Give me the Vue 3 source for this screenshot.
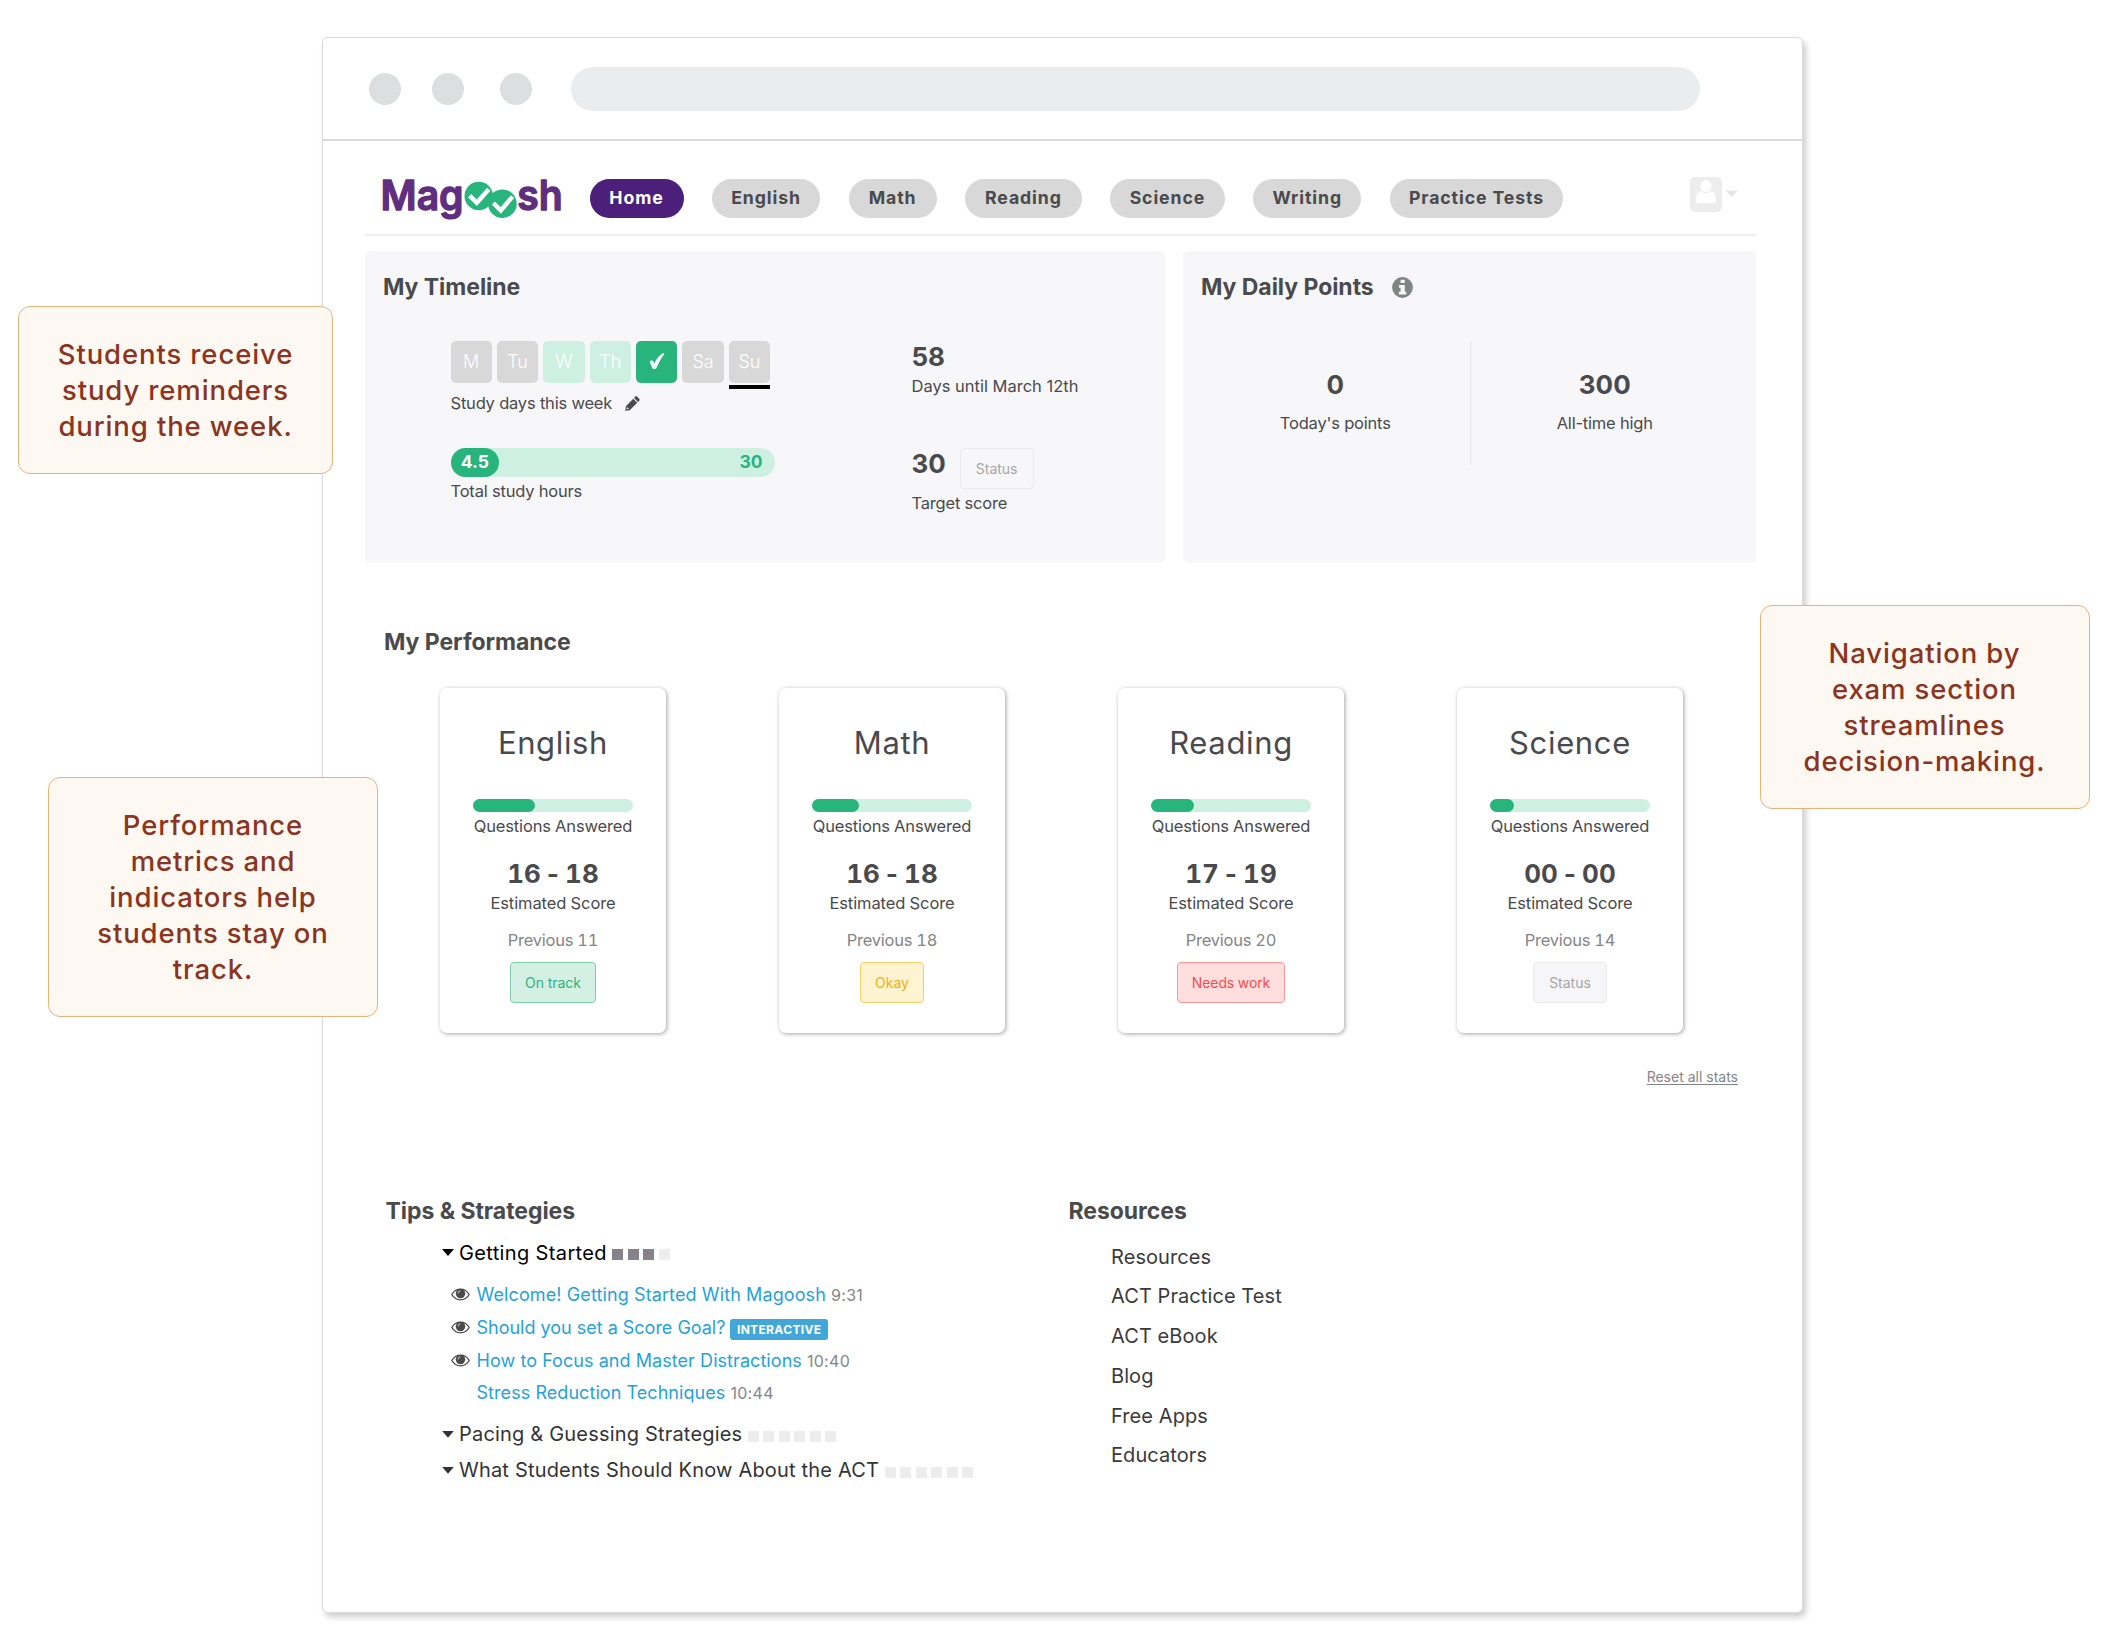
<script setup>
const nav = [
  { label: 'Home', width: 94, active: true },
  { label: 'English', width: 108.5 },
  { label: 'Math', width: 88 },
  { label: 'Reading', width: 117 },
  { label: 'Science', width: 114.5 },
  { label: 'Writing', width: 108.5 },
  { label: 'Practice Tests', width: 173.5 },
]

const days = [
  { label: 'M' },
  { label: 'Tu' },
  { label: 'W', state: 'planned' },
  { label: 'Th', state: 'planned' },
  { label: 'F', state: 'done' },
  { label: 'Sa' },
  { label: 'Su', today: true },
]

const subjects = [
  { name: 'English', progress: 38.8, score: '16 - 18', previous: 11, status: 'On track', tone: 'good' },
  { name: 'Math', progress: 29.4, score: '16 - 18', previous: 18, status: 'Okay', tone: 'okay' },
  { name: 'Reading', progress: 27, score: '17 - 19', previous: 20, status: 'Needs work', tone: 'bad' },
  { name: 'Science', progress: 15.2, score: '00 - 00', previous: 14, status: 'Status', tone: 'none' },
]

const lessons = [
  { title: 'Welcome! Getting Started With Magoosh', time: '9:31', seen: true },
  { title: 'Should you set a Score Goal?', tag: 'INTERACTIVE', seen: true },
  { title: 'How to Focus and Master Distractions', time: '10:40', seen: true },
  { title: 'Stress Reduction Techniques', time: '10:44', seen: false },
]

const closedTopics = ['Pacing & Guessing Strategies', 'What Students Should Know About the ACT']

const resources = ['Resources', 'ACT Practice Test', 'ACT eBook', 'Blog', 'Free Apps', 'Educators']

const callouts = [
  { place: 'reminders', lines: ['Students receive', 'study reminders', 'during the week.'] },
  { place: 'metrics', lines: ['Performance', 'metrics and', 'indicators help', 'students stay on', 'track.'] },
  { place: 'navigation', lines: ['Navigation by', 'exam section', 'streamlines', 'decision-making.'] },
]
</script>

<template>
  <div class="page">
    <main class="window">
      <div class="chrome">
        <i class="dot"></i>
        <i class="dot"></i>
        <i class="dot"></i>
        <div class="address"></div>
      </div>

      <div class="content">
        <header class="header">
          <svg class="logo" width="190" height="60" viewBox="0 0 190 60">
            <g fill="#5f2e7f" stroke="#5f2e7f" stroke-width="1.3" stroke-linejoin="round">
              <text x="2.6" y="39.6" textLength="83" lengthAdjust="spacingAndGlyphs">Mag</text>
              <text x="139.3" y="39.6" textLength="45.5" lengthAdjust="spacingAndGlyphs">sh</text>
            </g>
            <circle cx="100.8" cy="26" r="14.3" fill="#27b57d" />
            <circle cx="124.4" cy="33.7" r="14.3" fill="#27b57d" />
            <g fill="none" stroke="#fff" stroke-width="4.4">
              <path d="M91.6 25.6l7.2 7.2 12-13.6" />
              <path d="M115.4 33l7.4 7.4 11.8-13.8" />
            </g>
          </svg>
          <nav class="nav">
            <a v-for="item in nav" :key="item.label" class="pill" :class="{ active: item.active }" :style="{ width: item.width + 'px' }">{{ item.label }}</a>
          </nav>
          <svg class="user" width="48" height="36" viewBox="0 0 48 36">
            <rect width="32" height="35" rx="5" fill="#ededee" />
            <ellipse cx="16" cy="9" rx="5.6" ry="6" fill="#fff" />
            <path d="M6 23.5c0-6 2.2-9.3 5-9.3 1.4 1.3 3 2 5 2s3.6-.7 5-2c2.8 0 5 3.3 5 9.3 0 1.8-1 2.800-2.8 2.800H8.800C7 26.300 6 25.300 6 23.500z" fill="#fff" />
            <path d="M35.500 13.500h12.400l-6.200 6.500z" fill="#e6e6e7" />
          </svg>
        </header>

        <section class="panels">
          <div class="panel">
            <h2>My Timeline</h2>
            <div class="timeline">
              <div class="study">
                <div class="days">
                  <div v-for="day in days" :key="day.label" class="day" :class="[day.state, { today: day.today }]">
                    <svg v-if="day.state === 'done'" width="16" height="17" viewBox="0 0 16 17">
                      <path d="M.6 8.800C1 7.400 3.500 6.800 4.200 8.200l1.100 2.300C7.300 6.500 9.900 2.800 13.200.6c1-.7 2.700-.3 2 .7C11.800 5.800 9.500 10.200 7.400 15c-.6 1.400-3.200 1.500-3.900.2z" fill="#fff" />
                    </svg>
                    <span v-else>{{ day.label }}</span>
                  </div>
                </div>
                <div class="label study-days">
                  Study days this week
                  <svg width="15" height="15" viewBox="0 0 15 15">
                    <path d="M10.200.7c.6-.6 1.400-.6 2 0l2 2c.6.6.6 1.400 0 2L13 5.900 9 1.900zM8.200 2.700l4 4-7.500 7.500L.3 14.700l.6-4.500zM2 11l-.4 2.300 2.300-.4z" fill="#4a4a4d" fill-rule="evenodd" />
                  </svg>
                </div>
                <div class="hours">
                  <span class="hours-done">4.5</span>
                  <span class="hours-goal">30</span>
                </div>
                <div class="label total">Total study hours</div>
              </div>
              <div class="goal">
                <div class="number">58</div>
                <div class="label until">Days until March 12th</div>
                <div class="target">
                  <div class="number">30</div>
                  <span class="status none">Status</span>
                </div>
                <div class="label target-label">Target score</div>
              </div>
            </div>
          </div>

          <div class="panel">
            <h2>
              My Daily Points
              <svg width="21" height="21" viewBox="0 0 21 21">
                <circle cx="10.500" cy="10.500" r="10.400" fill="#7f8583" />
                <path d="M8.600 2.800h4.200v3.300H8.600zM7 8h5.800v6.800h1.500v2.700H6.900v-2.700h1.700v-4.100H7z" fill="#f7f7f9" />
              </svg>
            </h2>
            <div class="points">
              <div class="point">
                <div class="number">0</div>
                <div class="label">Today's points</div>
              </div>
              <div class="point">
                <div class="number">300</div>
                <div class="label">All-time high</div>
              </div>
            </div>
          </div>
        </section>

        <section class="performance">
          <h2>My Performance</h2>
          <div class="cards">
            <article v-for="s in subjects" :key="s.name" class="card">
              <h3>{{ s.name }}</h3>
              <div class="bar"><div class="fill" :style="{ width: s.progress + '%' }"></div></div>
              <div class="label answered">Questions Answered</div>
              <div class="number score">{{ s.score }}</div>
              <div class="label estimated">Estimated Score</div>
              <div class="label previous">Previous {{ s.previous }}</div>
              <span class="status" :class="s.tone">{{ s.status }}</span>
            </article>
          </div>
          <a class="reset">Reset all stats</a>
        </section>

        <section class="lower">
          <div class="tips">
            <h2>Tips &amp; Strategies</h2>
            <div class="topic open">
              <i class="caret"></i><span>Getting Started</span>
              <div class="squares"><i v-for="n in 4" :key="n" :class="{ on: n < 4 }"></i></div>
            </div>
            <ul class="lessons">
              <li v-for="l in lessons" :key="l.title">
                <div class="eye">
                  <svg v-if="l.seen" width="19" height="13" viewBox="0 0 19 13">
                    <path d="M.8 6.500C5 -.7 14 -.7 18.200 6.500 14 13.700 5 13.700.8 6.500z" fill="none" stroke="#4a4a4d" stroke-width="1.300" />
                    <circle cx="9.500" cy="5.600" r="4.700" fill="#4a4a4d" />
                    <path d="M7.200 5.300c0-1.400.8-2.200 2.100-2.400" fill="none" stroke="#fff" stroke-width=".9" />
                  </svg>
                </div>
                <a>{{ l.title }}</a>
                <span v-if="l.tag" class="tag">{{ l.tag }}</span>
                <span v-else class="time">{{ l.time }}</span>
              </li>
            </ul>
            <div v-for="t in closedTopics" :key="t" class="topic closed">
              <i class="caret"></i><span>{{ t }}</span>
              <div class="squares"><i v-for="n in 6" :key="n"></i></div>
            </div>
          </div>
          <div class="resources">
            <h2>Resources</h2>
            <ul>
              <li v-for="r in resources" :key="r">{{ r }}</li>
            </ul>
          </div>
        </section>
      </div>
    </main>

    <aside v-for="c in callouts" :key="c.place" class="callout" :class="c.place">
      <div v-for="line in c.lines" :key="line">{{ line }}</div>
    </aside>
  </div>
</template>

<style>
body {
  margin: 0;
  background: #fff;
}
</style>

<style scoped>
* {
  box-sizing: border-box;
}
.page {
  position: relative;
  width: 2126px;
  height: 1651px;
  padding: 37px 0 0 322px;
  overflow: hidden;
  font-family: Inter, "Liberation Sans", sans-serif;
  color: #4a4a4d;
}
.window {
  width: 1481px;
  height: 1576px;
  border: 1px solid #dcdcdd;
  border-radius: 6px;
  background: #fff;
  box-shadow: 3px 4px 6px rgba(0, 0, 0, 0.2);
}
.chrome {
  display: flex;
  align-items: center;
  height: 103px;
  padding: 1px 0 0 46px;
  border-bottom: 2px solid #dadadb;
}
.dot {
  width: 32px;
  height: 32px;
  border-radius: 50%;
  background: #dcdee0;
}
.dot + .dot {
  margin-left: 30.5px;
}
.dot + .dot + .dot {
  margin-left: 36px;
}
.address {
  width: 1129.5px;
  height: 44px;
  margin-left: 39px;
  border-radius: 22px;
  background: #ebecee;
}
.content {
  padding: 0 46px 0 42px;
}
.header {
  display: flex;
  align-items: flex-start;
  height: 95px;
  padding: 38px 18px 0 13px;
  border-bottom: 2px solid #ececed;
}
.logo {
  flex: none;
  margin-top: -9px;
  font-size: 41px;
  font-weight: 600;
}
.nav {
  display: flex;
  gap: 28.3px;
  margin-left: 21.5px;
}
.pill {
  height: 38.5px;
  border-radius: 20px;
  background: #d8d8d8;
  font-size: 17.7px;
  font-weight: 650;
  line-height: 38px;
  letter-spacing: 0.9px;
  text-align: center;
}
.pill.active {
  background: #4c1f7a;
  color: #fff;
}
.user {
  margin: -2px 0 0 auto;
}
.panels {
  display: grid;
  grid-template-columns: 800px 573px;
  gap: 18px;
  margin-top: 15px;
}
.panel {
  height: 312px;
  padding: 22px 18px 0;
  border-radius: 5px;
  background: #f7f7f9;
}
h2,
h3,
ul {
  margin: 0;
  padding: 0;
}
h2 {
  display: flex;
  align-items: center;
  gap: 18px;
  font-size: 23px;
  font-weight: 650;
  line-height: 28px;
  letter-spacing: -0.05px;
}
.label {
  font-size: 16.5px;
  line-height: 20px;
  letter-spacing: -0.2px;
  white-space: nowrap;
}
.number {
  font-size: 26px;
  font-weight: 700;
  line-height: 30px;
  letter-spacing: 0;
}
.timeline {
  display: flex;
  margin: 40px 0 0 67.5px;
}
.study {
  width: 461px;
}
.days {
  display: flex;
  gap: 5.1px;
}
.day {
  position: relative;
  display: flex;
  align-items: center;
  justify-content: center;
  width: 41.3px;
  height: 42px;
  padding-bottom: 2px;
  border-radius: 5px;
  background: #d8d8d8;
  color: #fff;
  font-size: 18px;
  font-weight: 300;
}
.day.planned {
  background: #cef0e2;
}
.day.done {
  background: #27b57d;
}
.day.today::after {
  content: "";
  position: absolute;
  top: 44px;
  left: 0;
  width: 100%;
  height: 3.5px;
  background: #000;
}
.study-days {
  display: flex;
  align-items: center;
  gap: 13px;
  margin-top: 10px;
}
.hours {
  display: flex;
  justify-content: space-between;
  width: 324px;
  height: 29px;
  margin-top: 35px;
  border-radius: 15px;
  background: #cef0e2;
  font-size: 17.5px;
  font-weight: 700;
  line-height: 28px;
}
.hours-done {
  width: 48.5px;
  border-radius: 15px;
  background: #27b57d;
  color: #fff;
  text-align: center;
}
.hours-goal {
  margin-right: 12px;
  color: #27b57d;
}
.total {
  margin-top: 4px;
}
.goal {
  padding-top: 1px;
}
.until {
  margin-top: 4px;
  letter-spacing: 0;
}
.target {
  display: flex;
  align-items: flex-start;
  justify-content: space-between;
  width: 122px;
  margin-top: 52px;
}
.target .number {
  margin-top: 1px;
}
.target .status {
  padding: 0 15px;
  background: none;
}
.target-label {
  margin-top: 4px;
}
.status {
  height: 40.5px;
  padding: 0 14px;
  border: 1px solid;
  border-radius: 4px;
  font-size: 14px;
  line-height: 39.5px;
}
.status.good {
  border-color: #7dd0ae;
  background: #d4efe4;
  color: #2fb47f;
}
.status.okay {
  border-color: #f7cf65;
  background: #fff3d1;
  color: #f2af0c;
}
.status.bad {
  border-color: #ff9696;
  background: #ffdede;
  color: #f94c4c;
  letter-spacing: -0.1px;
}
.status.none {
  padding: 0 15px;
  border-color: #ebebed;
  background-color: #f6f6f8;
  color: #a6a6a9;
}
.target .status.none {
  background-color: transparent;
}
.points {
  display: grid;
  grid-template-columns: 1fr 1fr;
  height: 124px;
  margin-top: 40px;
}
.point {
  padding-top: 29px;
  text-align: center;
}
.point + .point {
  border-left: 2px solid #efeff1;
}
.point .label {
  margin-top: 13px;
}
.performance {
  display: flex;
  flex-direction: column;
  margin-top: 65px;
  padding-left: 19px;
}
.cards {
  display: flex;
  gap: 113px;
  margin: 31.5px 0 0 56px;
}
.card {
  display: flex;
  flex-direction: column;
  align-items: center;
  width: 226px;
  height: 345.5px;
  padding-top: 36px;
  border-radius: 7px;
  background: #fff;
  box-shadow: 1px 1px 4px rgba(0, 0, 0, 0.36);
  font-variant-numeric: tabular-nums;
}
h3 {
  font-size: 31px;
  font-weight: 400;
  line-height: 38px;
  letter-spacing: 0.65px;
}
.bar {
  width: 159.5px;
  height: 12.5px;
  margin-top: 37.5px;
  border-radius: 7px;
  background: #cef0e2;
}
.fill {
  height: 100%;
  border-radius: 7px;
  background: #27b57d;
}
.answered {
  margin-top: 4px;
  letter-spacing: -0.15px;
}
.score {
  margin-top: 23px;
  letter-spacing: 0.1px;
  word-spacing: -3.5px;
}
.estimated {
  margin-top: 4px;
  letter-spacing: -0.1px;
}
.previous {
  margin: 17px 0 12.5px;
  color: #858588;
  letter-spacing: -0.25px;
}
.reset {
  align-self: flex-end;
  margin: 36px 18px 0 0;
  color: #858588;
  font-size: 14px;
  line-height: 16px;
  text-decoration: underline;
  text-underline-offset: 2px;
}
.lower {
  display: grid;
  grid-template-columns: 703.5px 1fr;
  margin-top: 111.5px;
}
.tips {
  padding-left: 20.5px;
}
.topic {
  display: flex;
  align-items: center;
  margin-left: 56.5px;
  color: #333335;
  font-size: 20px;
  line-height: 24px;
  letter-spacing: 0.19px;
}
.topic.open {
  margin-top: 16px;
  color: #000;
  letter-spacing: 0.36px;
}
.caret {
  width: 12px;
  height: 7px;
  margin-right: 5px;
  background: currentColor;
  clip-path: polygon(0 0, 100% 0, 50% 100%);
}
.squares {
  display: flex;
  gap: 4.5px;
  margin: 4px 0 0 5.5px;
}
.squares i {
  width: 11px;
  height: 11px;
  background: #ededee;
}
.squares i.on {
  background: #858389;
}
.lessons {
  margin: 14px 0 13px 66px;
  list-style: none;
}
.lessons li {
  display: flex;
  align-items: center;
  height: 32.7px;
  font-size: 18px;
  letter-spacing: 0.06px;
}
.lessons li:first-child a {
  letter-spacing: 0.11px;
}
.lessons li:nth-child(2) a {
  letter-spacing: -0.01px;
}
.lessons a {
  color: #1fa2de;
}
.eye {
  display: flex;
  width: 25.5px;
  margin-left: -0.5px;
}
.time {
  margin: 1px 0 0 5px;
  color: #858588;
  font-size: 16px;
  letter-spacing: 0.3px;
}
.tag {
  height: 21px;
  margin: 3px 0 0 5px;
  padding: 0 6.5px;
  border-radius: 3px;
  background: #42a7d8;
  color: #fff;
  font-size: 12px;
  font-weight: 650;
  line-height: 21px;
  letter-spacing: 0.35px;
}
.closed + .closed {
  margin-top: 12px;
}
.resources ul {
  margin: 13px 0 0 42.5px;
  list-style: none;
  color: #3a3a3c;
  font-size: 20px;
  line-height: 39.8px;
  letter-spacing: 0.08px;
}
.callout {
  position: absolute;
  padding-top: 29px;
  border: 1px solid #e6b47a;
  border-radius: 12px;
  background: #fdf8f2;
  color: #8c3420;
  font-size: 27.5px;
  font-weight: 450;
  line-height: 36px;
  letter-spacing: 0.88px;
  text-align: center;
}
.reminders {
  top: 306px;
  left: 18px;
  width: 315px;
  height: 168px;
}
.metrics {
  top: 777px;
  left: 48px;
  width: 330px;
  height: 240px;
}
.navigation {
  top: 604.5px;
  left: 1759.5px;
  width: 330px;
  height: 204px;
}
</style>
